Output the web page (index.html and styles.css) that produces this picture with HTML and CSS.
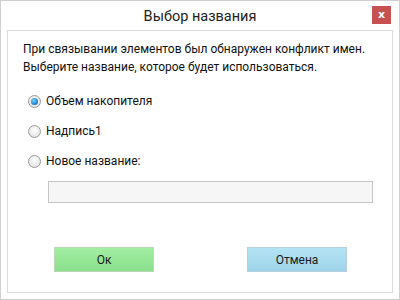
FILE: index.html
```html
<!DOCTYPE html>
<html lang="ru">
<head>
<meta charset="utf-8">
<link rel="stylesheet" href="styles.css">
</head>
<body>
<div class="window">
  <div class="titlebar">
    <span class="title">Выбор названия</span>
    <span class="close">x</span>
  </div>
  <div class="panel">
    <p class="message">При связывании элементов был обнаружен конфликт имен.<br>Выберите название, которое будет использоваться.</p>
    <div class="options">
      <label class="option"><span class="radio checked"></span>Объем накопителя</label>
      <label class="option"><span class="radio"></span>Надпись1</label>
      <label class="option"><span class="radio"></span>Новое название:</label>
      <div class="input"></div>
    </div>
    <div class="buttons">
      <span class="btn ok">Ок</span>
      <span class="btn cancel">Отмена</span>
    </div>
  </div>
</div>
</body>
</html>
```
FILE: styles.css
```css
* { box-sizing: border-box; }
html, body { margin: 0; padding: 0; background: #fff; }
body { font-family: Roboto, "Noto Sans", sans-serif; color: #111; }
.window {
  width: 400px; height: 300px;
  border: 1px solid #cfcfcf;
  padding: 0 6px 6px;
  display: flex; flex-direction: column;
}
.titlebar {
  height: 29px; flex: none;
  display: flex; align-items: center; justify-content: center;
  position: relative;
}
.title { font-size: 14.5px; color: #222; margin-top: 1px; }
.close {
  position: absolute; right: 2px; top: 5px;
  width: 19px; height: 18px;
  background: #c75050; color: #fff;
  font: bold 11px/17px "DejaVu Sans", sans-serif;
  text-align: center;
}
.panel {
  flex: 1;
  border: 1px solid #dcdcdc;
  padding: 9px 15px 0;
  display: flex; flex-direction: column;
}
.message { margin: 0; font-size: 12px; line-height: 18px; }
.options { margin-top: 10px; padding-left: 4px; display: flex; flex-direction: column; }
.option { display: flex; align-items: center; height: 30px; font-size: 12px; }
.radio {
  width: 13px; height: 13px; border-radius: 50%;
  border: 1px solid #9a9a9a;
  background: radial-gradient(circle at 50% 40%, #fff 0%, #e6e6e6 70%, #cfcfcf 100%);
  margin-right: 5px; margin-left: 1px;
  display: flex; align-items: center; justify-content: center;
}
.radio.checked::after {
  content: ""; width: 7px; height: 7px; border-radius: 50%;
  background: radial-gradient(circle at 40% 35%, #7fd0ff 0%, #1f86cf 60%, #155f9a 100%);
}
.input {
  margin: 5px 0 0 21px; width: 325px; height: 22px;
  border: 1px solid #c6c6c6; background: #f6f6f6;
}
.buttons { margin-top: 44px; display: flex; justify-content: space-between; padding: 0 30px 0 31px; }
.btn {
  width: 100px; height: 25px;
  display: flex; align-items: center; justify-content: center;
  font-size: 12px; color: #1a1a1a;
  border: 1px solid #c9d7c9;
}
.ok { background: linear-gradient(#a2eea2, #8ce08c); border-color: #b8d8b8; }
.cancel { background: linear-gradient(#b4e4f4, #9ed4ea); border-color: #b6d0dc; }
```
